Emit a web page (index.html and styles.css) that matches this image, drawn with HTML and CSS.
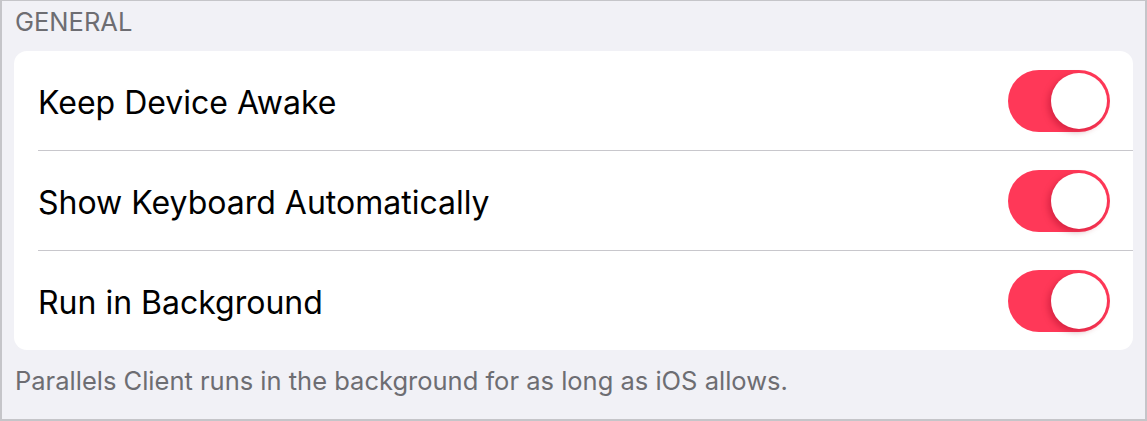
FILE: index.html
```html
<!DOCTYPE html>
<html>
<head>
<meta charset="utf-8">
<link rel="stylesheet" href="styles.css">
</head>
<body>
<div class="frame">
  <div class="section-header">GENERAL</div>
  <div class="card">
    <div class="row">
      <span class="label">Keep Device Awake</span>
      <span class="toggle"><span class="knob"></span></span>
    </div>
    <div class="divider"></div>
    <div class="row">
      <span class="label">Show Keyboard Automatically</span>
      <span class="toggle"><span class="knob"></span></span>
    </div>
    <div class="divider"></div>
    <div class="row">
      <span class="label">Run in Background</span>
      <span class="toggle"><span class="knob"></span></span>
    </div>
  </div>
  <div class="section-footer">Parallels Client runs in the background for as long as iOS allows.</div>
</div>
</body>
</html>
```
FILE: styles.css
```css
html, body {
  margin: 0;
  padding: 0;
}
body {
  font-family: Inter, "Liberation Sans", sans-serif;
}
.frame {
  box-sizing: border-box;
  width: 1147px;
  height: 421px;
  background: #f1f1f6;
  border: 2px solid #c5c5c9;
  border-top-width: 1px;
  padding: 0 12px;
}
.section-header {
  height: 50px;
  box-sizing: border-box;
  padding: 5px 0 0 1px;
  font-size: 25.5px;
  line-height: 32px;
  color: #6d6d72;
}
.card {
  background: #ffffff;
  border-radius: 13px;
  padding-left: 24px;
}
.row {
  height: 99px;
  display: flex;
  align-items: center;
  justify-content: space-between;
  padding-right: 23px;
}
.label {
  font-size: 32px;
  color: #000;
  padding-top: 3px;
}
.divider {
  height: 1px;
  background: #c8c7cc;
}
.toggle {
  width: 102px;
  height: 62px;
  border-radius: 31px;
  background: #ff3858;
  display: flex;
  align-items: center;
  justify-content: flex-end;
  padding-right: 3px;
  box-sizing: border-box;
}
.knob {
  width: 56px;
  height: 56px;
  border-radius: 50%;
  background: #fff;
  box-shadow: -3px 3px 6px rgba(150, 0, 30, 0.35);
}
.section-footer {
  padding: 15px 0 0 1px;
  font-size: 25.5px;
  line-height: 32px;
  color: #6d6d72;
}
```
